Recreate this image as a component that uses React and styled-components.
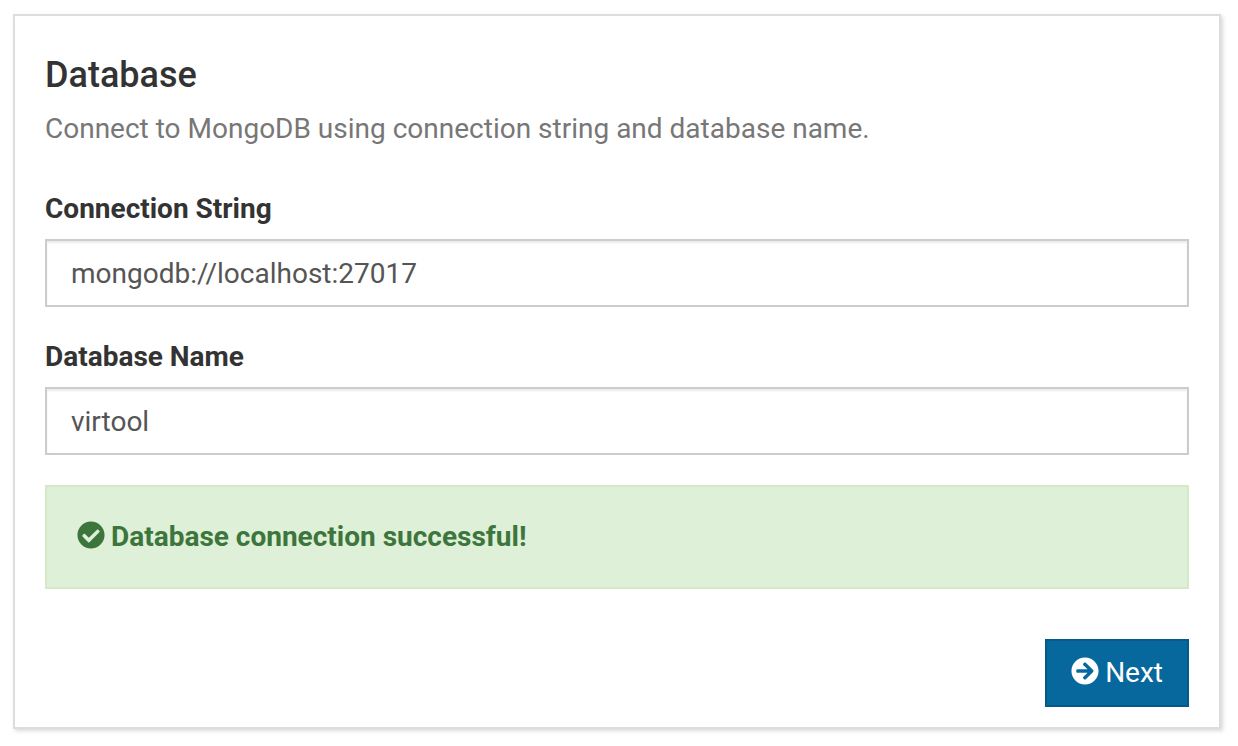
import React, { useState } from "react";
import styled, { createGlobalStyle } from "styled-components";
import { FaCheckCircle, FaArrowCircleRight } from "react-icons/fa";

const GlobalStyle = createGlobalStyle`
  *, *::before, *::after { box-sizing: border-box; }
  body {
    margin: 0;
    background: #fff;
    color: #333;
    font-family: Roboto, "Liberation Sans", sans-serif;
    font-size: 28px;
    line-height: 40px;
  }
`;

const Panel = styled.form`
  margin: 14px 17px 16px 13px;
  padding: 30px 30px 20px;
  border: 2px solid #ddd;
  background: #fff;
  box-shadow: 2px 2px 4px rgba(0, 0, 0, 0.15);
`;

const Header = styled.header`
  padding-top: 9px;
  margin-bottom: 40px;
`;

const Title = styled.h1`
  margin: 0 0 14px;
  font-size: 36px;
  font-weight: 500;
  line-height: 40px;
`;

const Description = styled.p`
  margin: 0;
  color: #777;
`;

const Field = styled.div`
  margin-bottom: 30px;
`;

const Label = styled.label`
  display: block;
  margin-bottom: 10px;
  font-weight: 700;
`;

const TextInput = styled.input`
  display: block;
  width: 100%;
  height: 68px;
  padding: 12px 24px;
  border: 2px solid #ccc;
  border-radius: 0;
  outline: none;
  background: #fff;
  box-shadow: inset 0 2px 2px rgba(0, 0, 0, 0.075);
  color: #555;
  font: inherit;
`;

const Alert = styled.div`
  margin-bottom: 50px;
  padding: 30px;
  border: 2px solid #d6e9c6;
  background: #dff0d8;
  color: #3c763d;
  font-weight: 700;

  svg {
    margin-right: 6px;
    vertical-align: -3px;
  }
`;

const Footer = styled.footer`
  display: flex;
  justify-content: flex-end;
`;

const Button = styled.button`
  height: 68px;
  padding: 12px 24px;
  border: 2px solid #07598a;
  border-radius: 0;
  background: #07689d;
  color: #fff;
  font: inherit;
  cursor: pointer;

  svg {
    margin-right: 6px;
    vertical-align: -3px;
  }
`;

export default function App() {
  const [connection, setConnection] = useState("mongodb://localhost:27017");
  const [name, setName] = useState("virtool");

  return (
    <>
      <GlobalStyle />
      <Panel onSubmit={(event) => event.preventDefault()}>
        <Header>
          <Title>Database</Title>
          <Description>
            Connect to MongoDB using connection string and database name.
          </Description>
        </Header>
        <Field>
          <Label htmlFor="connection">Connection String</Label>
          <TextInput
            id="connection"
            type="text"
            value={connection}
            onChange={(event) => setConnection(event.target.value)}
          />
        </Field>
        <Field>
          <Label htmlFor="name">Database Name</Label>
          <TextInput
            id="name"
            type="text"
            value={name}
            onChange={(event) => setName(event.target.value)}
          />
        </Field>
        <Alert role="status">
          <FaCheckCircle aria-hidden="true" />
          <span>Database connection successful!</span>
        </Alert>
        <Footer>
          <Button type="submit">
            <FaArrowCircleRight aria-hidden="true" />
            <span>Next</span>
          </Button>
        </Footer>
      </Panel>
    </>
  );
}
